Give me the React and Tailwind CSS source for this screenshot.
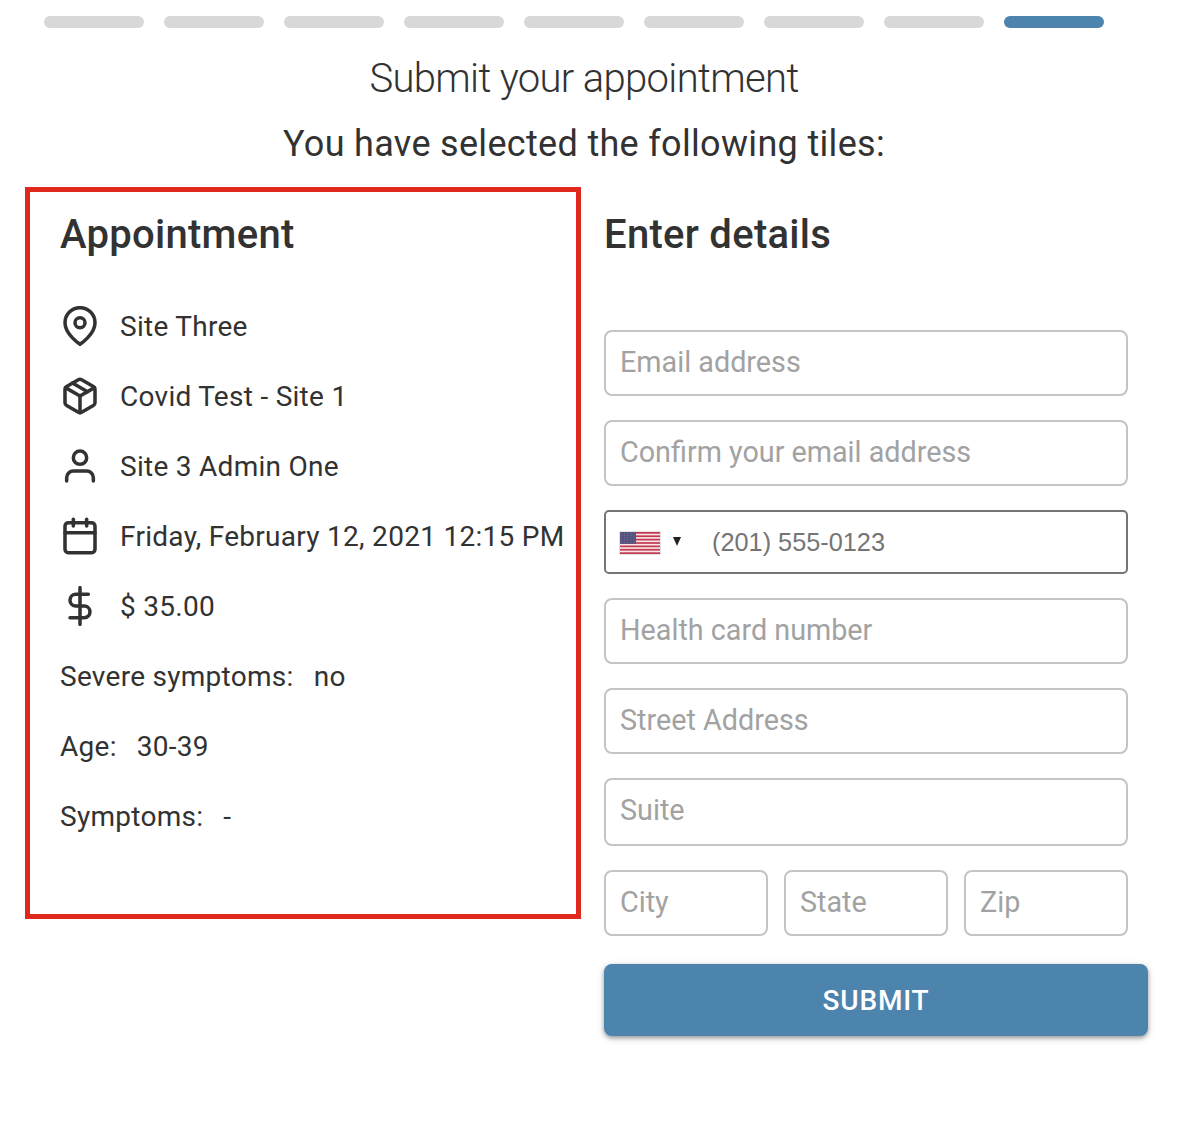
import React from "react";
import { FiMapPin, FiPackage, FiUser, FiCalendar, FiDollarSign } from "react-icons/fi";

const ICON = { size: 40, color: "#323232", strokeWidth: 2.12 };

function Row({ icon, children }) {
  return (
    <div className="flex h-[70px] items-center whitespace-nowrap">
      {icon && <div className="mb-0.5 mr-5 w-10 shrink-0">{icon}</div>}
      {children}
    </div>
  );
}

function Answer({ label, value }) {
  return (
    <Row>
      <span>{label}</span>
      <span className="ml-5">{value}</span>
    </Row>
  );
}

function Field({ label, className = "h-[66px] pb-0.5" }) {
  return (
    <input
      placeholder={label}
      className={`${className} w-full min-w-0 rounded-lg border-2 border-[#c4c4c4] bg-white px-3.5 text-[28.75px] placeholder:text-[#a2a2a2]`}
    />
  );
}

function Flag() {
  return (
    <svg className="mt-0.5" width="42" height="24" viewBox="0 0 42 24">
      <rect width="42" height="24" rx="1" fill="#e4e4e8" />
      <rect x="1" y="1" width="40" height="22" fill="#f8e4e7" />
      {[0, 1, 2, 3, 4, 5, 6].map((i) => (
        <rect key={i} x="1" y={1 + i * 3.38} width="40" height="1.7" fill="#c23a50" />
      ))}
      <rect x="1" y="1" width="16" height="11.8" fill="#55527f" />
      {[0, 1, 2, 3, 4].map((r) =>
        [0, 1, 2, 3, 4].map((c) => (
          <circle key={`${r}-${c}`} cx={2.6 + c * 3.1} cy={2.4 + r * 2.2} r="0.4" fill="#9c9bbd" />
        ))
      )}
    </svg>
  );
}

export default function App() {
  return (
    <div className="h-[1130px] w-[1192px] overflow-hidden bg-white font-[Roboto,sans-serif] text-[#323232]">
      <div className="flex gap-5 pl-11 pt-4">
        {Array.from({ length: 9 }, (_, i) => (
          <div key={i} className={`h-3 w-[100px] rounded-full ${i === 8 ? "bg-[#4d84ad]" : "bg-[#d8d8d8]"}`} />
        ))}
      </div>
      <h1 className="mt-[26px] w-[1168px] text-center text-[40px] font-light leading-[50px] tracking-[-0.66px]">Submit your appointment</h1>
      <h2 className="mt-[18px] w-[1168px] text-center text-[36px] leading-[44px] tracking-[0.32px]">You have selected the following tiles:</h2>
      <div className="mt-[21px] flex pl-[25px]">
        <section className="h-[732px] w-[556px] shrink-0 border-[5px] border-[#e0281c] pl-[30px] pt-[18px] text-[28px] tracking-[0.28px]">
          <h3 className="mb-[32px] text-[40px] font-medium leading-[50px] tracking-[0.28px]">Appointment</h3>
          <Row icon={<FiMapPin {...ICON} />}>Site Three</Row>
          <Row icon={<FiPackage {...ICON} />}>Covid Test - Site 1</Row>
          <Row icon={<FiUser {...ICON} />}>Site 3 Admin One</Row>
          <Row icon={<FiCalendar {...ICON} />}>Friday, February 12, 2021 12:15 PM</Row>
          <Row icon={<FiDollarSign {...ICON} />}>$ 35.00</Row>
          <Answer label="Severe symptoms:" value="no" />
          <Answer label="Age:" value="30-39" />
          <Answer label="Symptoms:" value="-" />
        </section>
        <section className="ml-[23px] w-[544px] pt-[23px]">
          <h3 className="text-[40px] font-medium leading-[50px] tracking-[0.28px]">Enter details</h3>
          <form className="mt-[70px] flex w-[524px] flex-col gap-6">
            <Field label="Email address" />
            <Field label="Confirm your email address" />
            <div className="flex h-16 items-center rounded-[5px] border-2 border-[#757575] pl-[13px]">
              <Flag />
              <svg className="mb-0.5 ml-3 mr-[31px]" width="8" height="9" viewBox="0 0 8 9">
                <path d="M0 0H8L4 9Z" fill="#222" />
              </svg>
              <input placeholder="(201) 555-0123" className="h-[30px] min-w-0 flex-1 font-['Liberation_Sans',Arial,sans-serif] text-[25.3px] leading-[30px] placeholder:text-[#757575]" />
            </div>
            <Field label="Health card number" />
            <Field label="Street Address" />
            <Field label="Suite" className="h-[68px] pb-1" />
            <div className="flex gap-4">
              <Field label="City" />
              <Field label="State" />
              <Field label="Zip" />
            </div>
          </form>
          <button className="mt-7 h-[72px] w-[544px] rounded-lg bg-[#4d84ad] pt-0.5 text-[28px] font-medium tracking-[0.8px] text-white shadow-[0_2px_4px_rgba(0,0,0,0.35),0_2px_10px_rgba(0,0,0,0.12)]">SUBMIT</button>
        </section>
      </div>
    </div>
  );
}
